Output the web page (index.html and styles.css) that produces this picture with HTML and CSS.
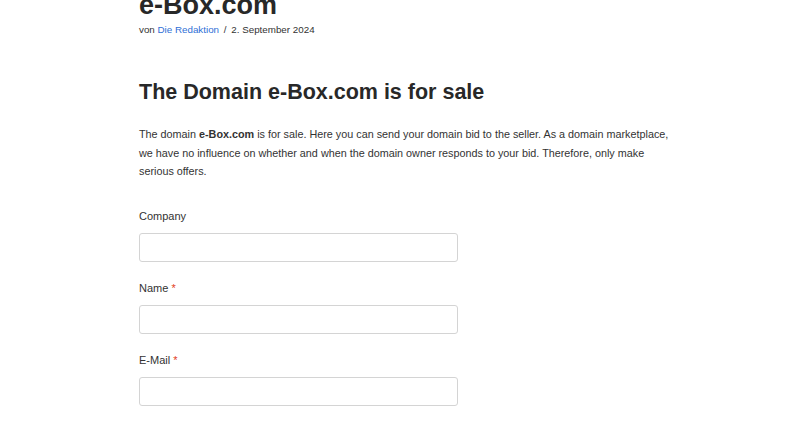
FILE: index.html
```html
<!DOCTYPE html>
<html>

<head>
  <title>e-Box.com</title>
  <link rel="stylesheet" href="styles.css">
</head>

<body>
  <div class="wrap">
    <h1 class="title">e-Box.com</h1>
    <div class="meta">von <a href="#">Die Redaktion</a> <span class="sep">/</span> 2. September 2024</div>

    <h2 class="head">The Domain e-Box.com is for sale</h2>
    <p class="intro">The domain <b>e-Box.com</b> is for sale. Here you can send your domain bid to the seller. As a domain marketplace, we have no influence on whether and when the domain owner responds to your bid. Therefore, only make serious offers.</p>

    <form class="offer">
      <div class="field">
        <label>Company</label>
        <input type="text" name="company">
      </div>
      <div class="field">
        <label>Name <span class="req">*</span></label>
        <input type="text" name="name" required>
      </div>
      <div class="field">
        <label>E-Mail <span class="req">*</span></label>
        <input type="email" name="email" required>
      </div>
    </form>
  </div>
</body>

</html>
```

FILE: styles.css
```css
body {
  margin: 0;
  background: #fff;
  color: #282828;
  font-family: "Liberation Sans", Arial, sans-serif;
}

.wrap {
  width: 532px;
  margin: 0 0 0 139px;
}

.title {
  font-size: 27px;
  line-height: 1;
  margin: -8px 0 0;
  color: #282828;
}

.meta {
  font-size: 9.8px;
  margin-top: 5px;
  color: #333;
}

.meta a {
  color: #2f6fd6;
  text-decoration: none;
}

.sep {
  margin: 0 2px;
}

.head {
  font-size: 21.5px;
  margin: 43px 0 0;
  line-height: 28px;
}

.intro {
  font-size: 10.8px;
  line-height: 18.5px;
  margin: 19px 0 0;
  color: #333;
}

.offer {
  margin-top: 29px;
}

.field {
  display: flex;
  flex-direction: column;
  gap: 11px;
  margin-bottom: 20px;
}

.field label {
  font-size: 11px;
  color: #333;
}

.req {
  color: #e2401c;
}

.field input {
  width: 319px;
  height: 29px;
  box-sizing: border-box;
  border: 1px solid #d4d4d4;
  border-radius: 3px;
  background: #fff;
}
```
